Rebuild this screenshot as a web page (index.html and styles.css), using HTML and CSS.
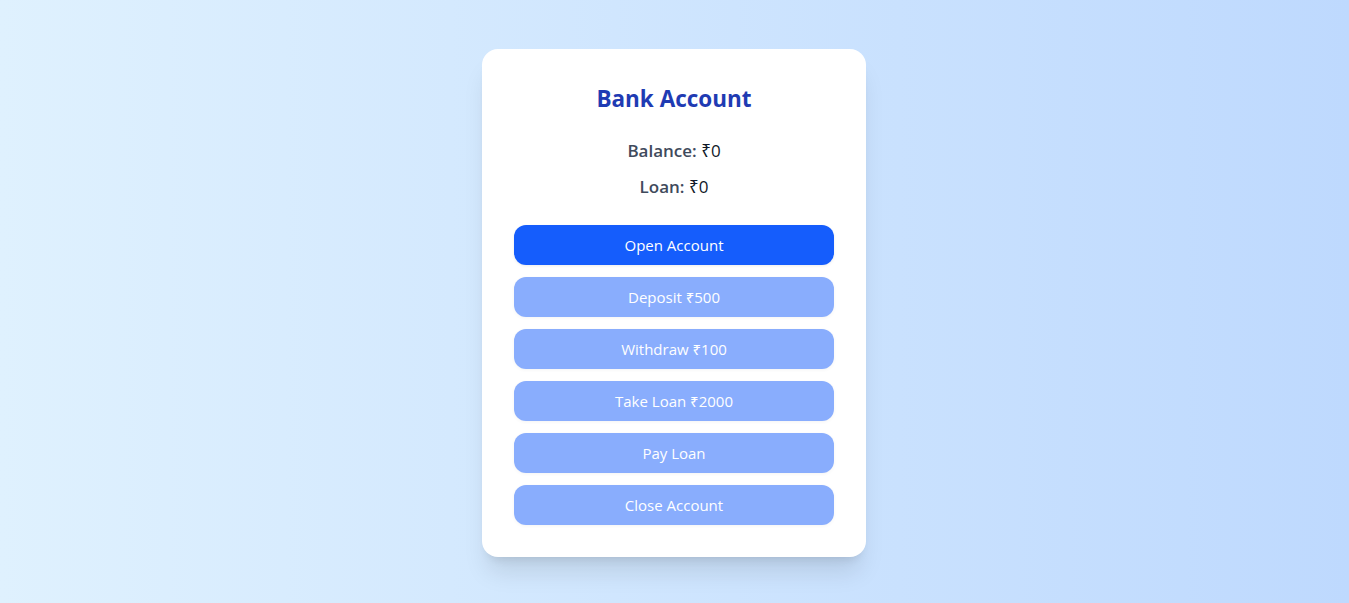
FILE: index.html
```html
<!DOCTYPE html>
<html lang="en">
<head>
<meta charset="utf-8">
<title>Bank Account</title>
<link rel="stylesheet" href="styles.css">
</head>
<body>
<main class="page">
  <section class="card">
    <h1 class="title">Bank Account</h1>
    <p class="stat stat-balance"><span class="label">Balance:</span> <span class="value">₹0</span></p>
    <p class="stat stat-loan"><span class="label">Loan:</span> <span class="value">₹0</span></p>
    <div class="actions">
      <button class="btn btn-primary">Open Account</button>
      <button class="btn" disabled>Deposit ₹500</button>
      <button class="btn" disabled>Withdraw ₹100</button>
      <button class="btn" disabled>Take Loan ₹2000</button>
      <button class="btn" disabled>Pay Loan</button>
      <button class="btn" disabled>Close Account</button>
    </div>
  </section>
</main>
</body>
</html>
```
FILE: styles.css
```css
* { box-sizing: border-box; }
html, body { margin: 0; padding: 0; }
body {
  font-family: "Open Sans", "Noto Sans", sans-serif;
  background: linear-gradient(to right, #dff1fe, #bed9fe);
  min-height: 100vh;
}
.page {
  min-height: 100vh;
  display: flex;
  align-items: center;
  justify-content: center;
  padding: 2px 1px 0 0;
}
.card {
  width: 384px;
  background: #fff;
  border-radius: 16px;
  padding: 32px;
  box-shadow: 0 20px 25px -5px rgba(0,0,0,0.1), 0 8px 10px -6px rgba(0,0,0,0.1);
  text-align: center;
}
.title {
  margin: 0 0 22px;
  padding-top: 2px;
  font-size: 22.5px;
  line-height: 32px;
  font-weight: 700;
  color: #1f3bb3;
}
.stat {
  margin: 0;
  font-size: 17px;
  line-height: 28px;
  color: #364153;
}
.stat .label { font-weight: 600; color: #3f4a5c; }
.stat .value { font-weight: 400; color: #111827; }
.stat-balance { margin-bottom: 8px; }
.stat-loan { margin-bottom: 24px; }
.actions {
  display: flex;
  flex-direction: column;
  gap: 12px;
}
.btn {
  height: 40px;
  border: 0;
  border-radius: 12px;
  background: #155dfc;
  color: #fff;
  font-family: inherit;
  font-size: 15px;
  box-shadow: 0 1px 3px rgba(0,0,0,0.08);
}
.btn:disabled { opacity: 0.5; }
```
